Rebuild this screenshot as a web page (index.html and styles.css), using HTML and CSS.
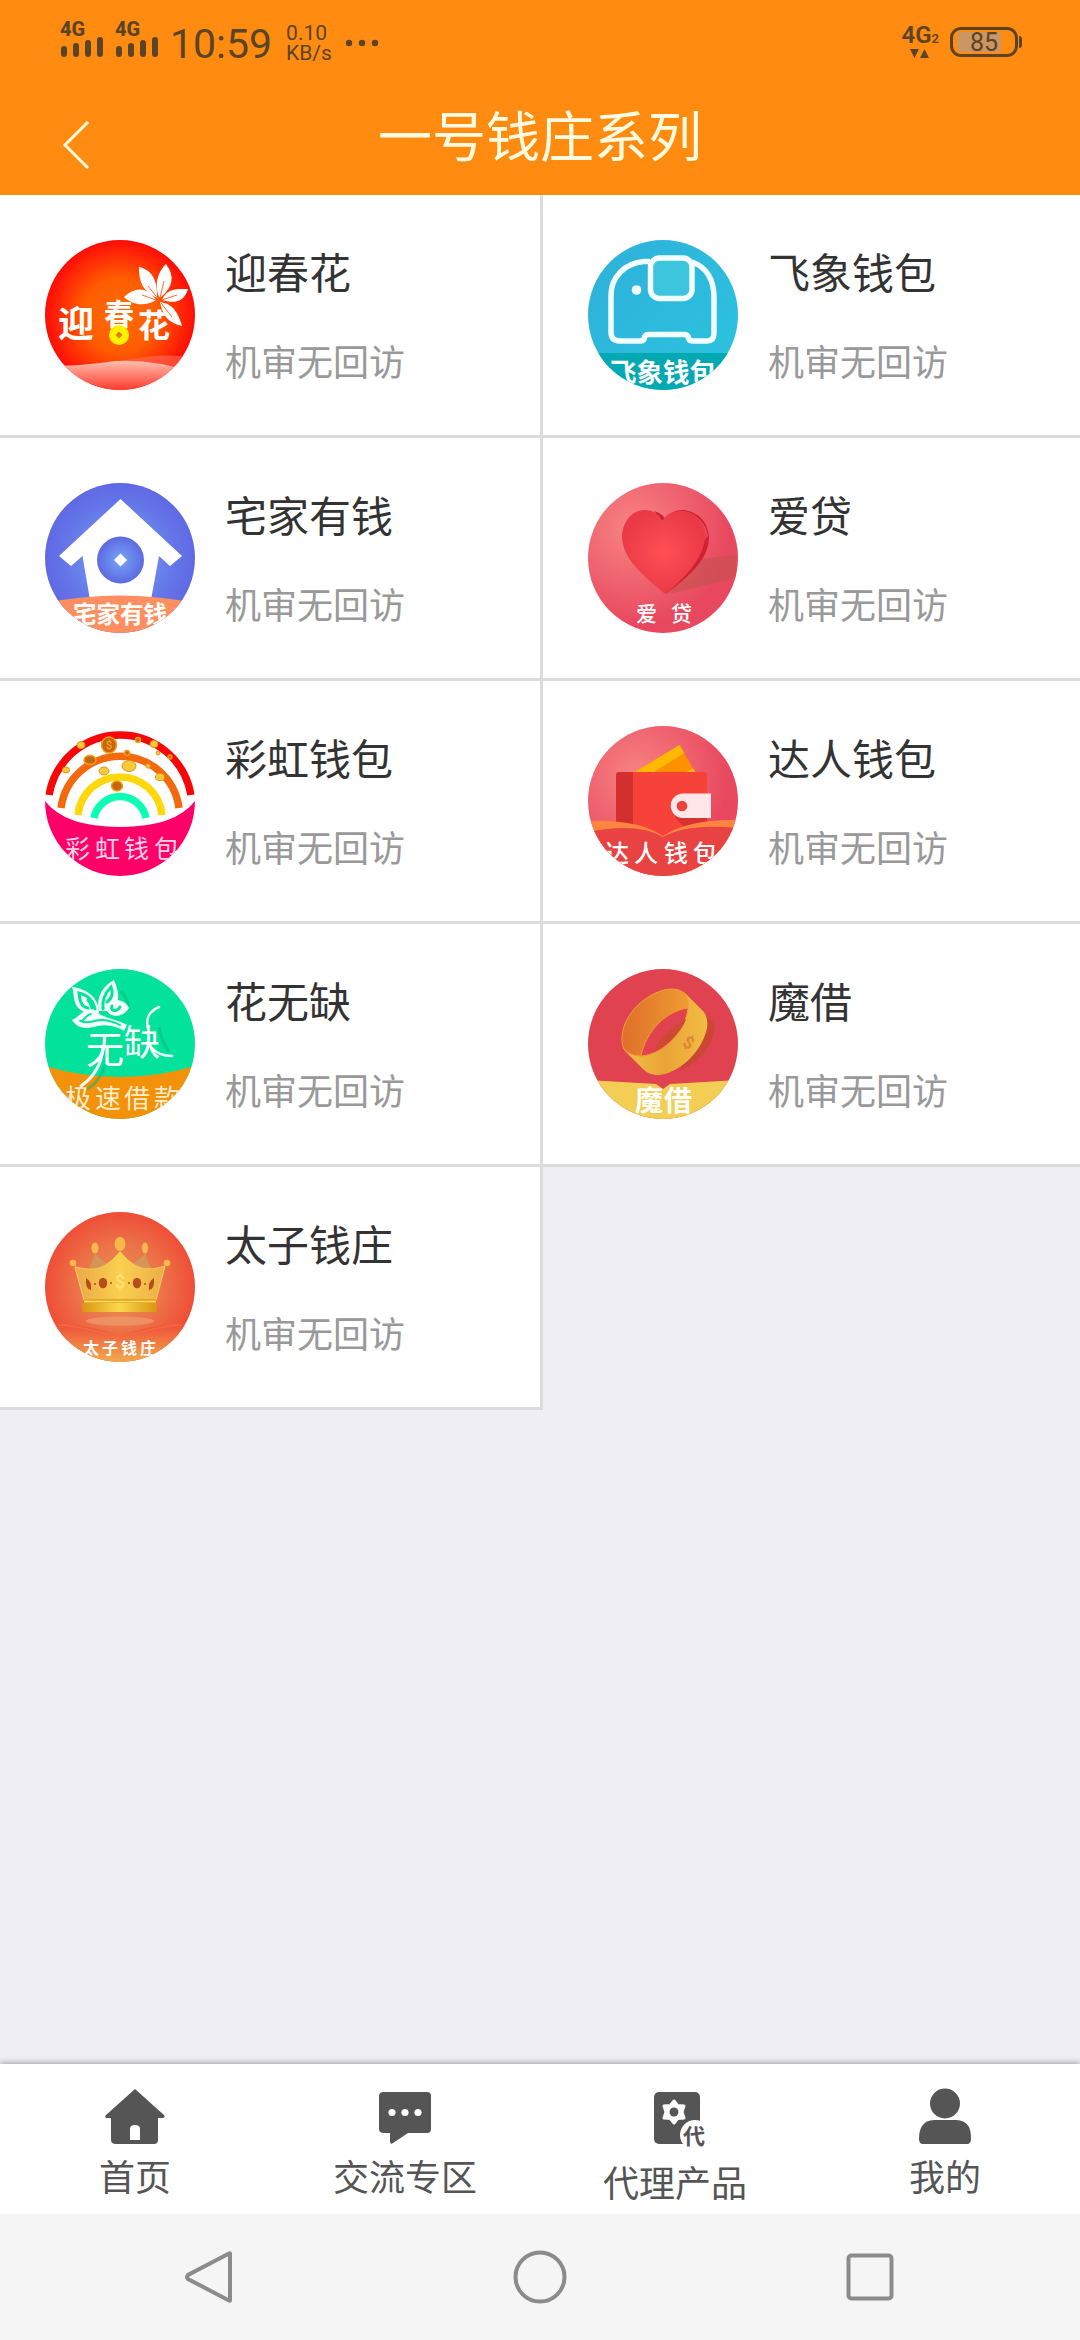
FILE: index.html
```html
<!DOCTYPE html>
<html lang="zh-CN">
<head>
<meta charset="utf-8">
<meta name="viewport" content="width=device-width, initial-scale=1">
<title>一号钱庄系列</title>
<link rel="stylesheet" href="styles.css">
</head>
<body>
<header class="header">
  <div class="status">
    <div class="signal"><span class="signal-label">4G</span>
      <svg width="44" height="21" viewBox="0 0 44 21"><g fill="currentColor"><rect x="1" y="10" width="6" height="11" rx="3"/><rect x="13" y="7" width="6" height="14" rx="3"/><rect x="25" y="4" width="6" height="17" rx="3"/><rect x="37" y="1" width="6" height="20" rx="3"/></g></svg>
    </div>
    <div class="signal"><span class="signal-label">4G</span>
      <svg width="44" height="21" viewBox="0 0 44 21"><g fill="currentColor"><rect x="1" y="10" width="6" height="11" rx="3"/><rect x="13" y="7" width="6" height="14" rx="3"/><rect x="25" y="4" width="6" height="17" rx="3"/><rect x="37" y="1" width="6" height="20" rx="3"/></g></svg>
    </div>
    <span class="clock">10:59</span>
    <div class="speed"><span>0.10</span><span>KB/s</span></div>
    <svg class="dots" width="34" height="8" viewBox="0 0 34 8"><g fill="currentColor"><circle cx="4" cy="4" r="3.200"/><circle cx="17" cy="4" r="3.200"/><circle cx="30" cy="4" r="3.200"/></g></svg>
    <div class="network">
      <span class="network-label">4G<small>2</small></span>
      <svg width="20" height="10" viewBox="0 0 20 10"><path fill="currentColor" d="M0 0h9L4.500 9zM10 9h9L14.500 0z"/></svg>
    </div>
    <div class="battery"><span>85</span></div>
  </div>
  <div class="titlebar">
    <button class="back" type="button" aria-label="返回"><svg width="28" height="50" viewBox="0 0 28 50"><path d="M26 2 3 25 26 48" fill="none" stroke="#fffbe0" stroke-width="3"/></svg></button>
    <h1 class="title">一号钱庄系列</h1>
  </div>
</header>

<main class="main">
<ul class="grid">
  <li class="cell"><a class="card" href="#yingchunhua">
    <svg class="logo" viewBox="0 0 150 150">
      <defs><radialGradient id="a1"><stop offset="0" stop-color="#ff6c00"/><stop offset=".5" stop-color="#ff5c00"/><stop offset="1" stop-color="#ff0c08"/></radialGradient>
      <linearGradient id="a2" x2="0" y2="1"><stop offset="0" stop-color="#ffc0ae"/><stop offset="1" stop-color="#ff3a2c"/></linearGradient></defs>
      <rect width="150" height="150" fill="url(#a1)"/>
      <path d="M0 124Q40 128 80 120T150 118V150H0Z" fill="#ff6a58" opacity=".6"/>
      <path d="M0 126Q30 127 70 121 110 119 150 133V150H0Z" fill="url(#a2)"/>
      <g fill="#fff">
        <path d="M112 58C97 50 94 42 94 27 106 30 112 38 112 56Z"/>
        <path d="M114 57C108 42 115 30 121 24 130 36 128 47 116 57Z"/>
        <path d="M117 60C122 48 132 49 143 49 139 62 130 64 117 60Z"/>
        <path d="M111 60C100 67 87 65 79 57 90 46 103 47 111 60Z"/>
        <path d="M115 62C127 64 132 70 137 86 124 83 118 77 115 62Z"/>
      </g>
      <path d="M114 60 103 46M115 58 119 41M117 60 132 55M111 60 97 55M116 63 127 77" stroke="#ff6a30" stroke-width="1" fill="none"/>
      <g class="logo-text"><text x="13" y="97" font-size="36">迎</text><text x="59" y="85" font-size="30">春</text><text x="93" y="97" font-size="32">花</text></g>
      <circle cx="74" cy="95" r="10" fill="#fff100"/><path d="M74 91.500 77.500 95 74 98.500 70.500 95Z" fill="#e08000"/>
    </svg>
    <div class="info"><h2 class="name">迎春花</h2><p class="note">机审无回访</p></div></a></li>

  <li class="cell"><a class="card" href="#feixiang">
    <svg class="logo" viewBox="0 0 150 150">
      <defs><linearGradient id="b1" x2="1" y2="1"><stop offset="0" stop-color="#2fb0da"/><stop offset="1" stop-color="#2bc4df"/></linearGradient></defs>
      <rect width="150" height="150" fill="url(#b1)"/>
      <path d="M0 113H150V150H0Z" fill="#03a9b2"/>
      <g fill="none" stroke="#f2feff" stroke-width="5.500" stroke-linejoin="round">
        <path d="M62 21.500H56C37 23 23 37 23 55V92Q23 101 32 101H52Q56 101 56.500 97.500 57 94.500 61 94.500H96Q100 94.500 100.500 98 101 101 105 101H119Q126 101 126 93V58C126 39 118 27 104 22"/>
        <rect x="62.500" y="18" width="41.500" height="40.500" rx="9" fill="#3cc5dd"/>
      </g>
      <circle cx="48.500" cy="50" r="4.800" fill="#f2feff"/>
      <text class="logo-text" x="22" y="142" font-size="26.500">飞象钱包</text>
    </svg>
    <div class="info"><h2 class="name">飞象钱包</h2><p class="note">机审无回访</p></div></a></li>

  <li class="cell"><a class="card" href="#zhaijia">
    <svg class="logo" viewBox="0 0 150 150">
      <defs><radialGradient id="c1"><stop offset="0" stop-color="#7ba9f7"/><stop offset=".75" stop-color="#6475e8"/><stop offset="1" stop-color="#5f69e4"/></radialGradient>
      <radialGradient id="c2"><stop offset="0" stop-color="#77a5f6"/><stop offset="1" stop-color="#5d6ae2"/></radialGradient></defs>
      <rect width="150" height="150" fill="url(#c1)"/>
      <path d="M75.500 16 137 73 125 83 114 73 106.500 114H44.500L37.500 73 26 83 14 73Z" fill="#fff"/>
      <circle cx="75.500" cy="77" r="23.500" fill="url(#c2)"/>
      <path d="M75.500 70.500 82 77 75.500 83.500 69 77Z" fill="#fff"/>
      <path d="M0 120Q75 105 150 120V150H0Z" fill="#ff8f60"/>
      <text class="logo-text" x="28" y="140" font-size="23.500">宅家有钱</text>
    </svg>
    <div class="info"><h2 class="name">宅家有钱</h2><p class="note">机审无回访</p></div></a></li>

  <li class="cell"><a class="card" href="#aidai">
    <svg class="logo" viewBox="0 0 150 150">
      <defs><radialGradient id="d1" cx=".3" cy=".3" r=".65"><stop offset="0" stop-color="#f88583"/><stop offset="1" stop-color="#e8485f"/></radialGradient>
      <radialGradient id="d2"><stop offset="0" stop-color="#ff5054"/><stop offset="1" stop-color="#ea3a47"/></radialGradient></defs>
      <rect width="150" height="150" fill="url(#d1)"/>
      <path d="M80 111 148 95V72L112 76Z" fill="#c75050" opacity=".65"/>
      <path d="M76 37C80 30 88 27 95 27 110 28 121 40 121 55 120 79 98 95 78 111Z" fill="#d3202f"/>
      <path d="M80 36C86 27 100 26 108 33 116 40 119 45 120 53L116 58Z" fill="#ea4455"/>
      <path d="M66 28Q73 30 77 35L74 38Z" fill="#cc2335"/>
      <path d="M76 110C56 93 34 76 34 53 35 37 45 27 57 27 65 27 71 31 74 38 79 30 87 28 94 28 108 29 117 40 117 54 116 75 98 93 79 110Q77.500 112 76 110Z" fill="url(#d2)"/>
      <g class="logo-text soft"><text x="48" y="138" font-size="21">爱</text><text x="83" y="138" font-size="21">贷</text></g>
    </svg>
    <div class="info"><h2 class="name">爱贷</h2><p class="note">机审无回访</p></div></a></li>

  <li class="cell"><a class="card" href="#caihong">
    <svg class="logo" viewBox="0 0 150 150">
      <rect width="150" height="150" fill="#fff"/>
      <g fill="none" stroke-width="7.500">
        <path d="M4 69A72 72 0 0 1 146 69" stroke="#f60808"/>
        <path d="M16 82A59.500 59.500 0 0 1 134 82" stroke="#f4690d"/>
        <path d="M33 89A42.200 42.200 0 0 1 117 89" stroke="#ffd80c"/>
        <path d="M49 92A26.500 26.500 0 0 1 101 92" stroke="#0bffb4"/>
      </g>
      <path d="M0 75Q20 101 75 101T150 75V150H0Z" fill="#ff0069"/>
      <g fill="#f8c93c" stroke="#d89a18" stroke-width="1">
        <ellipse cx="36" cy="19" rx="4" ry="3.500"/><ellipse cx="109" cy="18" rx="4" ry="3.500"/><circle cx="113" cy="27" r="2"/><ellipse cx="84" cy="40" rx="7" ry="5.500"/><circle cx="103" cy="40" r="2.200"/><ellipse cx="21" cy="44" rx="3.500" ry="3"/><ellipse cx="59" cy="45" rx="5" ry="4"/><ellipse cx="115" cy="51" rx="4.500" ry="3.500"/>
      </g>
      <g fill="#c8660c" stroke="#f0a01c" stroke-width="1.500">
        <ellipse cx="64" cy="19" rx="7.500" ry="8"/><circle cx="93" cy="14" r="2.500"/><circle cx="125" cy="31" r="2"/><ellipse cx="45" cy="34" rx="6" ry="4.500"/><circle cx="82" cy="27" r="2.500"/><ellipse cx="72" cy="60" rx="5.500" ry="5"/>
      </g>
      <text x="61" y="23" font-size="11" fill="#f5ad2a" font-family="Roboto,sans-serif">$</text>
      <text class="logo-text thin pink" x="20 50 79 109" y="132" font-size="25">彩虹钱包</text>
    </svg>
    <div class="info"><h2 class="name">彩虹钱包</h2><p class="note">机审无回访</p></div></a></li>

  <li class="cell"><a class="card" href="#daren">
    <svg class="logo" viewBox="0 0 150 150">
      <defs><radialGradient id="f1" cx=".32" cy=".32" r=".62"><stop offset="0" stop-color="#f78381"/><stop offset="1" stop-color="#e8485f"/></radialGradient></defs>
      <rect width="150" height="150" fill="url(#f1)"/>
      <path d="M47 46 91.500 19 107 46Z" fill="#ff9100"/><path d="M47 46 91.500 19 96 27 64 47Z" fill="#ffba00"/><path d="M97 47 105 42 108 47Z" fill="#ffba00"/>
      <path d="M45 46H31Q28 46 28 49V105H45Z" fill="#d42f2f"/>
      <path d="M45 46H116Q119 46 119 49V110H45Z" fill="#f64238"/>
      <path d="M87 91 96 101H119V91Z" fill="#d93030"/>
      <path d="M123 67.500H95A12 12 0 0 0 95 92H123Z" fill="#ffe6e8"/><circle cx="94" cy="80" r="5.300" fill="#ec4239"/>
      <path d="M0 95Q50 93 75 110 100 93 150 94V150H0Z" fill="#ff843f"/>
      <path d="M0 106Q50 96 75 111 100 97 150 102V150H0Z" fill="#e84242"/>
      <text class="logo-text soft" x="17 46 76 105" y="136" font-size="24">达人钱包</text>
    </svg>
    <div class="info"><h2 class="name">达人钱包</h2><p class="note">机审无回访</p></div></a></li>

  <li class="cell"><a class="card" href="#huawuque">
    <svg class="logo" viewBox="0 0 150 150">
      <rect width="150" height="150" fill="#03e29a"/>
      <path d="M0 97Q75 119 150 97V150H0Z" fill="#f39109"/>
      <g fill="none" stroke="#04b57e" stroke-width="3" opacity=".5"><path d="M76 22Q86 34 82 42M114 58Q116 72 124 83M60 96Q54 114 42 120"/></g>
      <g fill="#f4fff9">
        <path d="M54 44C54 30 44 20 27 18 30 26 26 40 43 44Z"/>
        <path d="M54 42C51 30 56 18 69 11 72 19 74 24 73 31Q82 33 84 39C78 49 66 49 62 42Z"/>
        <path d="M50 42C38 38 36 47 27 51 34 62 44 59 53 57 62 55 72 57 79 62L82 56C72 50 60 50 50 42Z"/>
      </g>
      <g fill="none" stroke="#03e29a" stroke-width="3" stroke-linecap="round">
        <path d="M50 40C48 31 42 26 34 24 35 32 36 38 43 39M43 31Q46 34 47 39"/>
        <path d="M58 40C57 30 60 24 66 18 69 25 66 30 62 33M75 38C71 44 65 42 67 37"/>
        <path d="M46 45C40 46 40 51 36 52 44 56 50 50 58 51 66 52 70 53 75 56" stroke-width="2"/>
      </g>
      <g fill="none" stroke="#f4fff9" stroke-linecap="round">
        <path d="M58 80C56 96 49 108 36 117" stroke-width="3"/>
        <path d="M103 60C100 48 105 42 114 38M107 79Q114 87 127 87" stroke-width="2.500"/>
      </g>
      <g class="logo-text thin"><text x="41" y="94" font-size="38">无</text><text x="79" y="87" font-size="36">缺</text></g>
      <text class="logo-text thin cream" x="20 50 79 109" y="139" font-size="26">极速借款</text>
    </svg>
    <div class="info"><h2 class="name">花无缺</h2><p class="note">机审无回访</p></div></a></li>

  <li class="cell"><a class="card" href="#mojie">
    <svg class="logo" viewBox="0 0 150 150">
      <defs><linearGradient id="h1"><stop offset="0" stop-color="#df6f2b"/><stop offset="1" stop-color="#ee9c31"/></linearGradient>
      <linearGradient id="h2"><stop offset="0" stop-color="#f3c346"/><stop offset=".5" stop-color="#e9a337"/><stop offset="1" stop-color="#f2bd43"/></linearGradient></defs>
      <rect width="150" height="150" fill="#e0424f"/>
      <path d="M119 48Q130 55 125 68 117 90 92 102Z" fill="#cb4635"/>
      <path d="M34 71C33 44 63 20 84 20 94 20 97 24 101 28L115 42C119 46 120 54 119 59 114 84 88 107 68 106 60 105 57 102 53 98L37 82Q34 79 34 71Z" fill="url(#h2)"/>
      <path d="M34 71C33 44 63 20 84 20 96 20 101 28 100 39 78 42 58 62 53 87 38 86 34 80 34 71Z" fill="url(#h1)" stroke="#f19a35" stroke-width="1"/>
      <path d="M53 87C58 62 78 42 100 39 98 60 78 85 53 87Z" fill="#e0424f" stroke="#ef9733" stroke-width="1"/>
      <path d="M66 82Q72 65 98 50 92 68 66 82Z" fill="#cd4933"/>
      <text x="-4" y="6" font-size="17" font-weight="700" fill="#dd8530" font-family="Roboto,sans-serif" transform="translate(100 73) rotate(30)">$</text>
      <path d="M0 111 68 115 75 120 82 115 150 111V150H0Z" fill="#f2ce54"/>
      <text class="logo-text" x="47 76" y="142" font-size="28">魔借</text>
    </svg>
    <div class="info"><h2 class="name">魔借</h2><p class="note">机审无回访</p></div></a></li>

  <li class="cell"><a class="card" href="#taizi">
    <svg class="logo" viewBox="0 0 150 150">
      <defs><radialGradient id="i1"><stop offset="0" stop-color="#ea9355"/><stop offset=".55" stop-color="#ec7549"/><stop offset="1" stop-color="#ef4e37"/></radialGradient>
      <linearGradient id="i2" x2="0" y2="1"><stop offset="0" stop-color="#ee5139"/><stop offset="1" stop-color="#f2aa4c"/></linearGradient>
      <linearGradient id="i3"><stop offset="0" stop-color="#e9a848"/><stop offset=".5" stop-color="#fbd04f"/><stop offset="1" stop-color="#e9ae48"/></linearGradient>
      <linearGradient id="i4"><stop offset="0" stop-color="#dc940f"/><stop offset=".5" stop-color="#f9d94c"/><stop offset="1" stop-color="#dc940f"/></linearGradient></defs>
      <rect width="150" height="150" fill="url(#i1)"/>
      <path d="M0 114Q35 110 75 123 115 110 150 114V150H0Z" fill="url(#i2)"/>
      <path d="M14 113C42 114 54 123 75 123S108 114 136 113" fill="none" stroke="#f4673f" stroke-width="2"/>
      <path d="M44 57 50 42 62 52 54 60ZM106 57 100 42 88 52 96 60Z" fill="#d49755"/>
      <path d="M30 55Q49 60 58 54 68 48 75 39 82 48 92 54 101 60 120 54L110 91H39.500Z" fill="url(#i3)"/>
      <path d="M30 55Q49 60 58 54M120 54Q101 60 92 54M30 55 39 88M120 54 111 88" stroke="#ffbe58" stroke-width="1.300" fill="none"/>
      <rect x="39" y="87" width="72" height="5" fill="#e9a21f"/><rect x="37" y="91" width="75" height="9" rx="2" fill="url(#i4)"/><path d="M39 89.500H111" stroke="#ffdc62" stroke-width="1.500"/>
      <g fill="#f9b94a"><ellipse cx="75" cy="32" rx="5.500" ry="7"/><ellipse cx="50" cy="36" rx="3.500" ry="5.500"/><ellipse cx="100" cy="36" rx="3" ry="5.500"/><circle cx="28" cy="51" r="3.300"/><circle cx="122" cy="51" r="3.300"/></g>
      <g fill="#b64b1c"><ellipse cx="58" cy="71" rx="4.200" ry="5.300"/><ellipse cx="92" cy="71" rx="4.200" ry="5.300"/><path d="M41 66Q47 69 46 78 40 77 41 66ZM109 66Q103 69 104 78 110 77 109 66Z"/><circle cx="50" cy="72" r="1"/><circle cx="66" cy="71" r="1"/><circle cx="84" cy="71" r="1"/><circle cx="100" cy="72" r="1"/></g>
      <text x="70" y="76" font-size="18" fill="#ffe37c" font-family="Roboto,sans-serif">$</text>
      <ellipse cx="75" cy="109" rx="34" ry="4.500" fill="#f0a578" opacity=".55"/>
      <text class="logo-text" x="38 57 76 95" y="142" font-size="16">太子钱庄</text>
    </svg>
    <div class="info"><h2 class="name">太子钱庄</h2><p class="note">机审无回访</p></div></a></li>
</ul>
</main>

<nav class="tabs">
  <a class="tab" href="#home">
    <svg width="60" height="60" viewBox="0 0 60 60"><path d="M30 3 59 29Q61 32 57 32H53V54Q53 58 49 58H11Q6 58 6 54V32H2Q-1 32 1 29Z" fill="currentColor"/><path d="M25 54V43Q25 39 30 39T35 43V54Z" fill="#fff"/></svg>
    <span>首页</span></a>
  <a class="tab" href="#forum">
    <svg width="60" height="60" viewBox="0 0 60 60"><path d="M9 6H52Q56 6 56 10V43Q56 47 52 47H33L18 57Q15 59 15 55V47H9Q4 47 4 43V10Q4 6 9 6Z" fill="currentColor"/><g fill="#fff"><circle cx="17" cy="26.500" r="3.600"/><circle cx="30" cy="26.500" r="3.600"/><circle cx="43" cy="26.500" r="3.600"/></g></svg>
    <span>交流专区</span></a>
  <a class="tab" href="#agent">
    <svg width="60" height="66" viewBox="0 0 60 66"><rect x="9" y="6" width="46" height="52" rx="5" fill="currentColor"/>
      <path d="M29 15 32.500 19.500 39 20 37 26 39 32 32.500 32.500 29 37 25.500 32.500 19 32 21 26 19 20 25.500 19.500Z" fill="#fff" stroke="#fff" stroke-width="3" stroke-linejoin="round"/><circle cx="29" cy="26" r="4.500" fill="currentColor"/>
      <circle cx="50" cy="49" r="15" fill="#fff"/><text x="38" y="58" font-size="22" font-weight="700" fill="currentColor">代</text></svg>
    <span>代理产品</span></a>
  <a class="tab" href="#me">
    <svg width="60" height="60" viewBox="0 0 60 60"><g fill="currentColor"><circle cx="30" cy="17.500" r="15"/><path d="M19 34H41Q50 34 54 41 56 45 56 53 56 58 52 58H8Q4 58 4 53 4 45 7 40 11 34 19 34Z"/></g></svg>
    <span>我的</span></a>
</nav>

<footer class="keys">
  <button type="button" aria-label="返回"><svg width="54" height="54" viewBox="0 0 54 54"><path d="M47 3.500V50.500Q47 51 46 50.500L5 29Q3 27 5 25L46 3.500Q47 3 47 3.500Z"/></svg></button>
  <button type="button" aria-label="主页"><svg width="54" height="54" viewBox="0 0 54 54"><circle cx="27" cy="27" r="24.500"/></svg></button>
  <button type="button" aria-label="最近任务"><svg width="54" height="54" viewBox="0 0 54 54"><rect x="5.500" y="5.500" width="43" height="43" rx="3"/></svg></button>
</footer>
</body>
</html>
```
FILE: styles.css
```css
* { box-sizing: border-box; }

body {
  margin: 0;
  min-height: 100vh;
  display: flex;
  flex-direction: column;
  background: #efeef4;
  color: #333;
  font-family: "Noto Sans CJK SC", sans-serif;
  font-weight: 400;
}

button { border: 0; padding: 0; background: none; }
a { color: inherit; text-decoration: none; }
svg { display: block; }

/* Header */
.header { background: #ff8c10; }

.status {
  display: flex;
  align-items: flex-start;
  height: 78px;
  padding: 20px 62px 0 60px;
  color: #5b4325;
  font-family: Roboto, sans-serif;
}
.signal { margin-right: 11px; }
.signal-label {
  display: block;
  height: 16px;
  font-size: 20px;
  line-height: 18px;
  font-weight: 800;
}
.clock { font-size: 41px; line-height: 48px; margin-right: 14px; }
.speed {
  display: flex;
  flex-direction: column;
  padding-top: 3px;
  font-size: 21px;
  line-height: 20px;
}
.dots { margin: 19px 0 0 13px; }
.network {
  display: flex;
  flex-direction: column;
  align-items: center;
  margin: 3px 11px 0 auto;
}
.network-label { height: 26px; font-size: 24px; line-height: 24px; font-weight: 600; }
.network-label small { font-size: 13px; line-height: 1; }
.battery {
  position: relative;
  width: 68px;
  height: 30px;
  margin-top: 7px;
  border: 3px solid #5b4325;
  border-radius: 11px;
  background: linear-gradient(90deg, #cb9664 82%, transparent 82%) content-box;
  padding: 2px 4px;
  text-align: center;
  font-size: 25px;
  line-height: 21px;
}
.battery::after {
  content: "";
  position: absolute;
  right: -7px;
  top: 6px;
  width: 3px;
  height: 12px;
  border-radius: 0 3px 3px 0;
  background: #5b4325;
}

.titlebar {
  display: grid;
  grid-template-columns: 120px 1fr 120px;
  align-items: start;
  height: 117px;
}
.back { justify-self: end; margin: 42px 30px 0 0; }
.title {
  margin: 16px 0 0;
  text-align: center;
  color: #fffbe0;
  font-size: 54px;
  line-height: 80px;
  font-weight: 400;
}

/* Product grid */
.main { flex: 1; }
.grid {
  display: grid;
  grid-template-columns: calc(50% + 3px) 1fr;
  margin: 0;
  padding: 0;
  list-style: none;
}
.cell { background: #fff; border-bottom: 3px solid #dcdcdc; }
.cell:nth-child(odd) { border-right: 3px solid #dcdcdc; }
.card { display: flex; gap: 30px; padding: 45px; }
.logo { width: 150px; height: 150px; border-radius: 50%; flex: none; }
.name, .note { margin: 0; font-weight: 400; }
.name { font-size: 42px; line-height: 62px; }
.note { margin-top: 31px; font-size: 36px; line-height: 54px; color: #999; }

.logo-text { fill: #fff; font-weight: 700; }
.soft { font-weight: 500; }
.thin { font-weight: 400; }
.pink { fill: #ffd3e6; }
.cream { fill: #ffedcc; }

/* Bottom tabs */
.tabs {
  display: grid;
  grid-template-columns: repeat(4, 1fr);
  height: 150px;
  padding-top: 22px;
  background: #fff;
  box-shadow: 0 -1px 6px rgba(0, 0, 0, .35);
  color: #555;
  font-size: 36px;
  line-height: 54px;
}
.tab { display: flex; flex-direction: column; align-items: center; gap: 2px; }

/* System keys */
.keys {
  position: relative;
  display: grid;
  grid-template-columns: repeat(3, 1fr);
  justify-items: center;
  align-items: center;
  height: 126px;
  padding: 0 45px;
  background: #f5f5f5;
}
.keys svg { fill: none; stroke: #8b8b8b; stroke-width: 4px; }
```
